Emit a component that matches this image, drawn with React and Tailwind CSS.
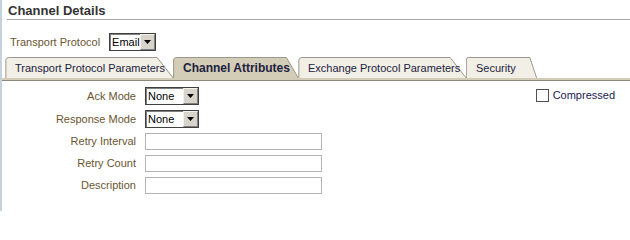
import React from 'react';

const font = { fontFamily: '"Liberation Sans", Arial, sans-serif' };

function Dropdown({ value, width }) {
  return (
    <div className={`flex h-[18px] shrink-0 ${width} border border-[#404040] bg-white`}>
      <div className="min-w-0 flex-1 whitespace-nowrap border-l border-t border-[#808080] pl-[1px] text-[11px] leading-[15px] text-black">
        {value}
      </div>
      <div className="flex w-[15px] shrink-0 items-center justify-center border border-[#f4f2ec] border-r-[#808080] border-b-[#808080] bg-[#d8d4cc]">
        <svg width="7" height="4" viewBox="0 0 7 4">
          <path d="M0 0h7L3.5 4z" fill="#000" />
        </svg>
      </div>
    </div>
  );
}

function Tab({ label, active, width, first }) {
  const fill = active ? '#d3ccb6' : '#f1efe6';
  return (
    <div className={`relative h-[21px] shrink-0 ${width} ${first ? '' : '-ml-[1px]'} ${active ? 'z-10' : ''}`}>
      <svg className="absolute inset-0" width="100%" height="21" preserveAspectRatio="none" viewBox="0 0 100 21">
        <path
          d="M0.5 21V3Q0.5 0.5 3 0.5H90L99.5 21"
          fill={fill}
          stroke="#9c9889"
          strokeWidth="1"
          vectorEffect="non-scaling-stroke"
        />
      </svg>
      <span
        className={`relative block whitespace-nowrap pl-[10px] pt-[4px] leading-[14px] text-[#1c2240] ${active ? 'text-[12px] font-bold' : 'text-[11px]'}`}
      >
        {label}
      </span>
    </div>
  );
}

export default function App() {
  return (
    <div className="h-[211px] w-[630px] overflow-hidden border-l-2 border-[#c4d2e0] bg-white" style={font}>
      <div className="ml-[5px] h-[20px] border-b border-[#a8a8a8] pl-[1px] pt-[3px] text-[13px] font-bold leading-[15px] text-[#333333]">
        Channel Details
      </div>

      <div className="ml-[8px] mt-[13px] flex items-center gap-[9px]">
        <span className="text-[11px] text-[#6a5530]">Transport Protocol</span>
        <Dropdown value="Email" width="w-[47px]" />
      </div>

      <div className="ml-[3px] mt-[6px] flex items-end">
        <Tab label="Transport Protocol Parameters" width="w-[169px]" first />
        <Tab label="Channel Attributes" active width="w-[126px]" />
        <Tab label="Exchange Protocol Parameters" width="w-[169px]" />
        <Tab label="Security" width="w-[71px]" />
      </div>
      <div className="h-[3px] border-b border-[#8c887a] bg-[#d3ccb6]" />

      <div className="flex pt-[6px]">
        <div className="grid grid-cols-[134px_177px] items-center gap-x-[9px] gap-y-[5px] text-[11px]">
          <span className="text-right text-[#6a5530]">Ack Mode</span>
          <Dropdown value="None" width="w-[54px]" />
          <span className="text-right text-[#6a5530]">Response Mode</span>
          <Dropdown value="None" width="w-[54px]" />
          <span className="text-right text-[#6a5530]">Retry Interval</span>
          <div className="h-[17px] border border-[#b4b4b4]" />
          <span className="text-right text-[#6a5530]">Retry Count</span>
          <div className="h-[17px] border border-[#b4b4b4]" />
          <span className="text-right text-[#6a5530]">Description</span>
          <div className="h-[17px] border border-[#b4b4b4]" />
        </div>
        <label className="ml-auto mr-[15px] mt-[1px] flex h-[14px] items-center gap-[4px] text-[11px] text-[#1a1a50]">
          <span className="h-[13px] w-[13px] border border-[#505050] bg-white" />
          Compressed
        </label>
      </div>
    </div>
  );
}
